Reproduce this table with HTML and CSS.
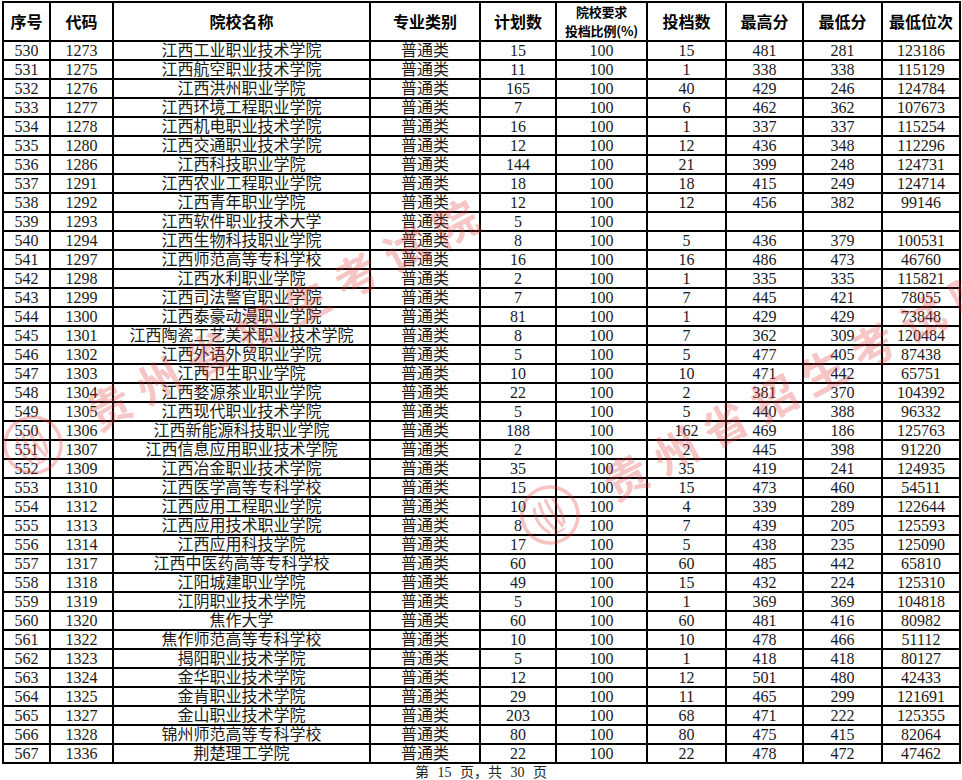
FILE: index.html
```html
<!DOCTYPE html>
<html lang="zh-CN">
<head>
<meta charset="utf-8">
<title>第 15 页</title>
<link rel="stylesheet" href="styles.css">
</head>
<body>
<div class="page">
  <div class="sheet">
    <div class="h">序号</div><div class="h">代码</div><div class="h">院校名称</div><div class="h">专业类别</div><div class="h">计划数</div><div class="h h2"><span>院校要求</span><span>投档比例(%)</span></div><div class="h">投档数</div><div class="h">最高分</div><div class="h">最低分</div><div class="h">最低位次</div>
    <div>530</div><div>1273</div><div>江西工业职业技术学院</div><div>普通类</div><div>15</div><div>100</div><div>15</div><div>481</div><div>281</div><div>123186</div>
    <div>531</div><div>1275</div><div>江西航空职业技术学院</div><div>普通类</div><div>11</div><div>100</div><div>1</div><div>338</div><div>338</div><div>115129</div>
    <div>532</div><div>1276</div><div>江西洪州职业学院</div><div>普通类</div><div>165</div><div>100</div><div>40</div><div>429</div><div>246</div><div>124784</div>
    <div>533</div><div>1277</div><div>江西环境工程职业学院</div><div>普通类</div><div>7</div><div>100</div><div>6</div><div>462</div><div>362</div><div>107673</div>
    <div>534</div><div>1278</div><div>江西机电职业技术学院</div><div>普通类</div><div>16</div><div>100</div><div>1</div><div>337</div><div>337</div><div>115254</div>
    <div>535</div><div>1280</div><div>江西交通职业技术学院</div><div>普通类</div><div>12</div><div>100</div><div>12</div><div>436</div><div>348</div><div>112296</div>
    <div>536</div><div>1286</div><div>江西科技职业学院</div><div>普通类</div><div>144</div><div>100</div><div>21</div><div>399</div><div>248</div><div>124731</div>
    <div>537</div><div>1291</div><div>江西农业工程职业学院</div><div>普通类</div><div>18</div><div>100</div><div>18</div><div>415</div><div>249</div><div>124714</div>
    <div>538</div><div>1292</div><div>江西青年职业学院</div><div>普通类</div><div>12</div><div>100</div><div>12</div><div>456</div><div>382</div><div>99146</div>
    <div>539</div><div>1293</div><div>江西软件职业技术大学</div><div>普通类</div><div>5</div><div>100</div><div></div><div></div><div></div><div></div>
    <div>540</div><div>1294</div><div>江西生物科技职业学院</div><div>普通类</div><div>8</div><div>100</div><div>5</div><div>436</div><div>379</div><div>100531</div>
    <div>541</div><div>1297</div><div>江西师范高等专科学校</div><div>普通类</div><div>16</div><div>100</div><div>16</div><div>486</div><div>473</div><div>46760</div>
    <div>542</div><div>1298</div><div>江西水利职业学院</div><div>普通类</div><div>2</div><div>100</div><div>1</div><div>335</div><div>335</div><div>115821</div>
    <div>543</div><div>1299</div><div>江西司法警官职业学院</div><div>普通类</div><div>7</div><div>100</div><div>7</div><div>445</div><div>421</div><div>78055</div>
    <div>544</div><div>1300</div><div>江西泰豪动漫职业学院</div><div>普通类</div><div>81</div><div>100</div><div>1</div><div>429</div><div>429</div><div>73848</div>
    <div>545</div><div>1301</div><div>江西陶瓷工艺美术职业技术学院</div><div>普通类</div><div>8</div><div>100</div><div>7</div><div>362</div><div>309</div><div>120484</div>
    <div>546</div><div>1302</div><div>江西外语外贸职业学院</div><div>普通类</div><div>5</div><div>100</div><div>5</div><div>477</div><div>405</div><div>87438</div>
    <div>547</div><div>1303</div><div>江西卫生职业学院</div><div>普通类</div><div>10</div><div>100</div><div>10</div><div>471</div><div>442</div><div>65751</div>
    <div>548</div><div>1304</div><div>江西婺源茶业职业学院</div><div>普通类</div><div>22</div><div>100</div><div>2</div><div>381</div><div>370</div><div>104392</div>
    <div>549</div><div>1305</div><div>江西现代职业技术学院</div><div>普通类</div><div>5</div><div>100</div><div>5</div><div>440</div><div>388</div><div>96332</div>
    <div>550</div><div>1306</div><div>江西新能源科技职业学院</div><div>普通类</div><div>188</div><div>100</div><div>162</div><div>469</div><div>186</div><div>125763</div>
    <div>551</div><div>1307</div><div>江西信息应用职业技术学院</div><div>普通类</div><div>2</div><div>100</div><div>2</div><div>445</div><div>398</div><div>91220</div>
    <div>552</div><div>1309</div><div>江西冶金职业技术学院</div><div>普通类</div><div>35</div><div>100</div><div>35</div><div>419</div><div>241</div><div>124935</div>
    <div>553</div><div>1310</div><div>江西医学高等专科学校</div><div>普通类</div><div>15</div><div>100</div><div>15</div><div>473</div><div>460</div><div>54511</div>
    <div>554</div><div>1312</div><div>江西应用工程职业学院</div><div>普通类</div><div>10</div><div>100</div><div>4</div><div>339</div><div>289</div><div>122644</div>
    <div>555</div><div>1313</div><div>江西应用技术职业学院</div><div>普通类</div><div>8</div><div>100</div><div>7</div><div>439</div><div>205</div><div>125593</div>
    <div>556</div><div>1314</div><div>江西应用科技学院</div><div>普通类</div><div>17</div><div>100</div><div>5</div><div>438</div><div>235</div><div>125090</div>
    <div>557</div><div>1317</div><div>江西中医药高等专科学校</div><div>普通类</div><div>60</div><div>100</div><div>60</div><div>485</div><div>442</div><div>65810</div>
    <div>558</div><div>1318</div><div>江阳城建职业学院</div><div>普通类</div><div>49</div><div>100</div><div>15</div><div>432</div><div>224</div><div>125310</div>
    <div>559</div><div>1319</div><div>江阴职业技术学院</div><div>普通类</div><div>5</div><div>100</div><div>1</div><div>369</div><div>369</div><div>104818</div>
    <div>560</div><div>1320</div><div>焦作大学</div><div>普通类</div><div>60</div><div>100</div><div>60</div><div>481</div><div>416</div><div>80982</div>
    <div>561</div><div>1322</div><div>焦作师范高等专科学校</div><div>普通类</div><div>10</div><div>100</div><div>10</div><div>478</div><div>466</div><div>51112</div>
    <div>562</div><div>1323</div><div>揭阳职业技术学院</div><div>普通类</div><div>5</div><div>100</div><div>1</div><div>418</div><div>418</div><div>80127</div>
    <div>563</div><div>1324</div><div>金华职业技术学院</div><div>普通类</div><div>12</div><div>100</div><div>12</div><div>501</div><div>480</div><div>42433</div>
    <div>564</div><div>1325</div><div>金肯职业技术学院</div><div>普通类</div><div>29</div><div>100</div><div>11</div><div>465</div><div>299</div><div>121691</div>
    <div>565</div><div>1327</div><div>金山职业技术学院</div><div>普通类</div><div>203</div><div>100</div><div>68</div><div>471</div><div>222</div><div>125355</div>
    <div>566</div><div>1328</div><div>锦州师范高等专科学校</div><div>普通类</div><div>80</div><div>100</div><div>80</div><div>475</div><div>415</div><div>82064</div>
    <div>567</div><div>1336</div><div>荆楚理工学院</div><div>普通类</div><div>22</div><div>100</div><div>22</div><div>478</div><div>472</div><div>47462</div>
  </div>
  <div class="footer">第 15 页，共 30 页</div>

  <div class="mark mark-a">
    <svg class="seal" width="62" height="62" viewBox="0 0 62 62" aria-hidden="true">
      <circle cx="31" cy="31" r="28" fill="none" stroke="currentColor" stroke-width="3.5"/>
      <path d="M20 18 C16 28 16 36 22 46 M27 16 C24 28 25 36 29 47 M34 16 C33 28 34 36 37 46 M41 18 C43 28 43 36 40 44" fill="none" stroke="currentColor" stroke-width="3" stroke-linecap="round"/>
      <path d="M24 50 L38 50" stroke="currentColor" stroke-width="2"/>
    </svg>
    <span class="mark-text">贵州省招生考试院</span>
  </div>
  <div class="mark mark-b">
    <svg class="seal" width="62" height="62" viewBox="0 0 62 62" aria-hidden="true">
      <circle cx="31" cy="31" r="28" fill="none" stroke="currentColor" stroke-width="3.5"/>
      <path d="M20 18 C16 28 16 36 22 46 M27 16 C24 28 25 36 29 47 M34 16 C33 28 34 36 37 46 M41 18 C43 28 43 36 40 44" fill="none" stroke="currentColor" stroke-width="3" stroke-linecap="round"/>
      <path d="M24 50 L38 50" stroke="currentColor" stroke-width="2"/>
    </svg>
    <span class="mark-text">贵州省招生考试院</span>
  </div>
</div>
</body>
</html>
```
FILE: styles.css
```css
html, body {
  margin: 0;
  padding: 0;
  background: #fff;
}

.page {
  position: relative;
  width: 962px;
  height: 780px;
  overflow: hidden;
}

.sheet {
  margin: 1px 0 0 2px;
  display: grid;
  grid-template-columns: 47px 63px 257px 110px 76px 91px 79px 77px 79px 78px;
  grid-template-rows: 39px;
  grid-auto-rows: 19px;
  width: max-content;
  border-left: 2px solid #000;
  border-top: 2px solid #000;
  font-family: "Liberation Serif", "Noto Sans CJK SC", serif;
  font-size: 16px;
  color: #1a1a1a;
}

.sheet > div {
  box-sizing: border-box;
  border-right: 2px solid #000;
  border-bottom: 2px solid #000;
  display: flex;
  align-items: center;
  justify-content: center;
  text-align: center;
  line-height: 17px;
  white-space: nowrap;
  overflow: hidden;
}

.sheet > .h {
  font-family: "Noto Sans CJK SC", sans-serif;
  font-weight: 700;
  font-size: 16px;
  color: #000;
}

.sheet > .h2 {
  flex-direction: column;
  font-size: 13px;
  line-height: 18.5px;
  letter-spacing: -0.2px;
}

.footer {
  margin-top: 2px;
  width: 962px;
  text-align: center;
  font-family: "Liberation Serif", "Noto Sans CJK SC", serif;
  font-size: 14px;
  line-height: 14px;
  word-spacing: 5px;
  color: #222;
}

.mark {
  position: absolute;
  display: flex;
  align-items: center;
  gap: 32px;
  color: rgba(226, 52, 52, 0.3);
  transform: rotate(-28deg);
  transform-origin: 31px 31px;
  pointer-events: none;
  white-space: nowrap;
}

.mark-a {
  left: 2px;
  top: 414px;
}

.mark-b {
  left: 519px;
  top: 484px;
}

.mark-text {
  font-family: "Noto Sans CJK SC", sans-serif;
  font-weight: 700;
  font-size: 44px;
  letter-spacing: 12px;
  line-height: 62px;
}
```
